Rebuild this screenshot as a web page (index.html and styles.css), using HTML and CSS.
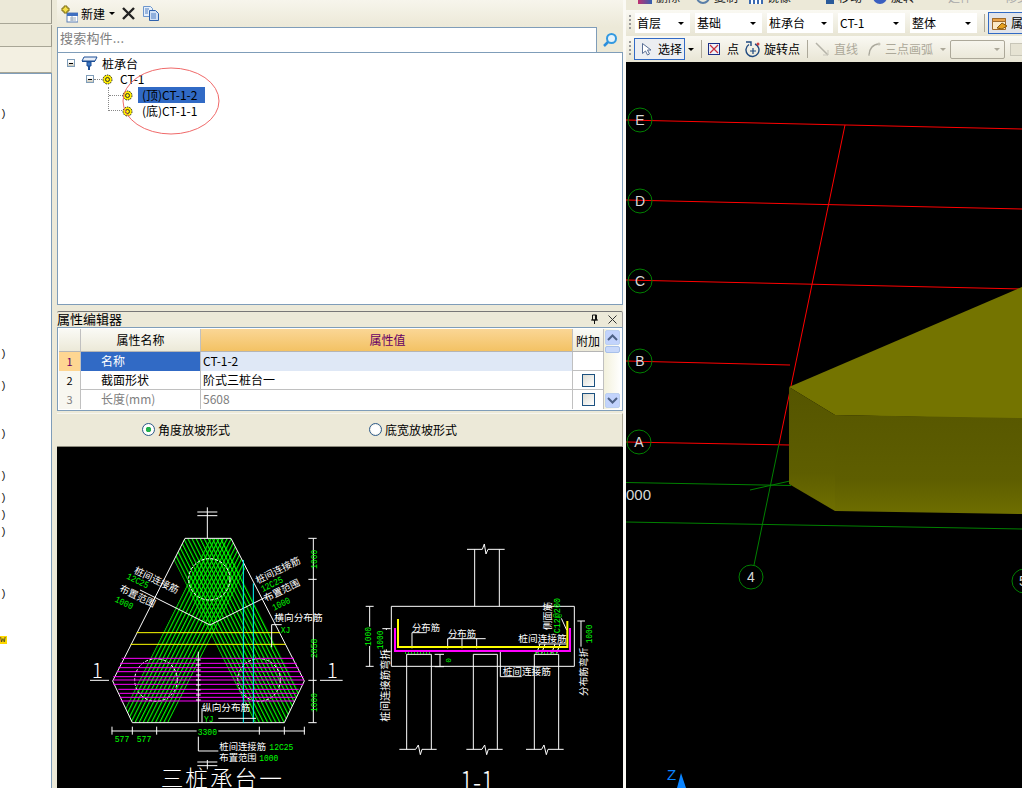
FILE: index.html
```html
<!DOCTYPE html>
<html lang="zh">
<head>
<meta charset="utf-8">
<title>桩承台</title>
<link rel="stylesheet" href="styles.css">
</head>
<body>
<div class="app">
  <aside class="left">
    <div class="left-tab t1"></div>
    <div class="left-tab t2"></div>
    <div class="left-tab t3"></div>
    <div class="left-list">
      <span class="p p1">)</span><span class="p p2">)</span><span class="p p3">)</span><span class="p p4">)</span><span class="p p5">)</span><span class="p p6">)</span><span class="p p7">)</span><span class="p p8">)</span><span class="p p9">)</span><span class="p w">w</span>
    </div>
  </aside>

  <main class="mid">
    <div class="tools">
      <svg class="ico-new" width="17" height="18" viewBox="0 0 17 18"><rect x="6" y="8" width="11" height="9" fill="#fff" stroke="#5b7fb5"/><rect x="6" y="8" width="11" height="3" fill="#3f6fc0"/><path d="M9 13h6M9 15h6M11 11v5" stroke="#9ab" fill="none"/><path d="M3 1h3v2h2v3H6v2H3V6H1V3h2z" fill="#f6e04a" stroke="#7a6a10"/></svg>
      <span class="tool-t">新建</span>
      <i class="arrow a-new"></i>
      <svg class="ico-x" width="15" height="15" viewBox="0 0 15 15"><path d="M2 2l11 11M13 2L2 13" stroke="#222" stroke-width="2.4"/></svg>
      <svg class="ico-copy" width="16" height="15" viewBox="0 0 16 15"><path d="M.5.5h7l2 2v8h-9z" fill="#e6effa" stroke="#6d96cc"/><path d="M6.500 4.500h6l3 3v7h-9z" fill="#cfe0f6" stroke="#2f62ad"/><path d="M2 3h4M2 5h3M2 7h3M8 8h5M8 10h5M8 12h5" stroke="#4f7fc2"/></svg>
    </div>
    <div class="search">
      <div class="search-box">搜索构件...</div>
      <div class="search-btn"><svg width="16" height="16" viewBox="0 0 16 16"><circle cx="9.500" cy="6.500" r="4.500" fill="#e4f2fb" stroke="#3399e0" stroke-width="2"/><path d="M6 10l-4 4" stroke="#2c8fdc" stroke-width="2.500"/></svg></div>
    </div>
    <div class="tree">
      <div class="node n0">
        <i class="exp"></i>
        <svg class="ico-cap" width="17" height="14" viewBox="0 0 17 14"><path d="M3 1h13l-2 4H1z" fill="#e8eef8" stroke="#1d4f96"/><path d="M1 5h13v1H1z" fill="#1d4f96"/><path d="M6 6h4v4H6z" fill="#3f78c4" stroke="#1d4f96"/><path d="M8 10v4" stroke="#1d4f96" stroke-width="2"/></svg>
        <span>桩承台</span>
      </div>
      <div class="node n1">
        <i class="exp"></i><i class="dots-h"></i>
        <svg class="gear" width="11" height="11" viewBox="0 0 11 11"><circle cx="5.500" cy="5.500" r="4.500" fill="#ffee00" stroke="#222" stroke-dasharray="1.500 1"/><circle cx="5.500" cy="5.500" r="2" fill="#ffee00" stroke="#333"/></svg>
        <span>CT-1</span>
      </div>
      <div class="branch"></div>
      <div class="node n2">
        <svg class="gear" width="11" height="11" viewBox="0 0 11 11"><circle cx="5.500" cy="5.500" r="4.500" fill="#ffee00" stroke="#222" stroke-dasharray="1.500 1"/><circle cx="5.500" cy="5.500" r="2" fill="#ffee00" stroke="#333"/></svg>
        <span class="sel">(顶)CT-1-2</span>
      </div>
      <div class="node n3">
        <svg class="gear" width="11" height="11" viewBox="0 0 11 11"><circle cx="5.500" cy="5.500" r="4.500" fill="#ffee00" stroke="#222" stroke-dasharray="1.500 1"/><circle cx="5.500" cy="5.500" r="2" fill="#ffee00" stroke="#333"/></svg>
        <span class="lbl">(底)CT-1-1</span>
      </div>
      <svg class="ring" width="100" height="70" viewBox="0 0 100 70"><ellipse cx="49" cy="35" rx="48" ry="33" fill="none" stroke="#f06a6a"/></svg>
    </div>

    <div class="prop-head">
      <span class="prop-title">属性编辑器</span>
      <svg width="9" height="11" viewBox="0 0 9 11" class="pin"><path d="M2.500 1h4v5h-4zM1 6h7M4.500 6v4M5.500 1v5" stroke="#111" fill="none"/></svg>
      <svg width="9" height="9" viewBox="0 0 9 9" class="close"><path d="M.5.500l8 8M8.500.500l-8 8" stroke="#333" fill="none"/></svg>
    </div>
    <div class="prop">
      <div class="grid">
        <div class="row head">
          <div class="c num"></div><div class="c name">属性名称</div><div class="c val hv">属性值</div><div class="c add">附加</div>
        </div>
        <div class="row r1">
          <div class="c num on">1</div><div class="c name on2">名称</div><div class="c val v1">CT-1-2</div><div class="c add"></div>
        </div>
        <div class="row">
          <div class="c num">2</div><div class="c name">截面形状</div><div class="c val">阶式三桩台一</div><div class="c add"><i class="chk"></i></div>
        </div>
        <div class="row dim">
          <div class="c num">3</div><div class="c name">长度(mm)</div><div class="c val">5608</div><div class="c add"><i class="chk"></i></div>
        </div>
      </div>
      <div class="sbar">
        <div class="sb-btn"><svg width="11" height="7" viewBox="0 0 11 7"><path d="M1 6l4.500-4.500L10 6" stroke="#4d6185" stroke-width="2" fill="none"/></svg></div>
        <div class="sb-thumb"></div>
        <div class="sb-btn down"><svg width="11" height="7" viewBox="0 0 11 7"><path d="M1 1l4.500 4.500L10 1" stroke="#4d6185" stroke-width="2" fill="none"/></svg></div>
      </div>
    </div>
    <div class="radios">
      <span class="rad r-a"><i class="radio checked"></i>角度放坡形式</span>
      <span class="rad r-b"><i class="radio"></i>底宽放坡形式</span>
    </div>

    <svg class="cad" viewBox="57 447 566 341" width="566" height="341">
      <defs>
        <pattern id="hb" width="11" height="11" patternUnits="userSpaceOnUse" patternTransform="rotate(-26.600)"><rect width="3.500" height="11" fill="#00ff00"/></pattern>
        <pattern id="ha" width="11" height="11" patternUnits="userSpaceOnUse" patternTransform="rotate(26.600)"><rect width="3.500" height="11" fill="#00ff00"/></pattern>
        <clipPath id="hex"><path d="M285 115H423L643 543 583 668H127L68 543Z"/></clipPath>
      </defs>
      <g transform="translate(90 500) scale(.33333)">
        <g clip-path="url(#hex)">
          <path d="M219 115H400L676 668H495Z" fill="url(#hb)"/>
          <path d="M361 115H511L235 668H85Z" fill="url(#ha)"/>
        </g>
        <path class="k" d="M352 22V115M322 36H382M322 47H382M285 115H423L643 543 583 668H127L68 543ZM150 270L360 375 530 290M0 541H57M690 541H758"/>
        <circle class="k dash" cx="358" cy="238" r="62"/><circle class="k dash" cx="198" cy="540" r="64"/><circle class="k dash" cx="507" cy="540" r="64"/>
        <path class="m" d="M95 475H612M90 490H620M85 503H626M80 515H632M70 530H640M70 540H642M70 553H640M85 568H626M88 580H620M90 592H616M92 603H612"/>
        <path class="y" d="M140 398H570M122 433H586"/>
        <path class="cy" d="M460 180V668M490 250V668"/>
        <path class="k" d="M545 374V442M545 374H575M325 455V668M336 625V668M385 655H498M670 115V668M655 115H680M655 238H680M655 541H680M655 668H680M65 693H320M385 693H645M66 680V704M127 680V704M200 680V704M508 680V704M583 680V704M643 680V704M325 710V753H385M352 780V808M322 786H382M322 797H382"/>
        <path class="k" d="M318 480H332M318 495H332M318 510H332M318 525H332M318 540H332M318 555H332M318 570H332M318 585H332M318 600H332"/>
        <text class="tw" x="553" y="363" font-size="29">横向分布筋</text>
        <text class="tg" x="572" y="400" font-size="28" textLength="29" lengthAdjust="spacingAndGlyphs">XJ</text>
        <text class="tw" x="336" y="634" font-size="29">纵向分布筋</text>
        <text class="tg" x="342" y="666" font-size="28" textLength="29" lengthAdjust="spacingAndGlyphs">YJ</text>
        <text class="tg" x="74" y="726" font-size="28" textLength="44" lengthAdjust="spacingAndGlyphs">577</text>
        <text class="tg" x="140" y="726" font-size="28" textLength="44" lengthAdjust="spacingAndGlyphs">577</text>
        <text class="tg" x="323" y="704" font-size="28" textLength="58" lengthAdjust="spacingAndGlyphs">3300</text>
        <text class="tw" x="388" y="749" font-size="28">桩间连接筋</text><text class="tg" x="538" y="750" font-size="28" textLength="72" lengthAdjust="spacingAndGlyphs">12C25</text>
        <text class="tw" x="388" y="784" font-size="28">布置范围</text><text class="tg" x="508" y="783" font-size="28" textLength="57" lengthAdjust="spacingAndGlyphs">1000</text>
        <text class="tg" transform="translate(680 206) rotate(-90)" font-size="28" textLength="57" lengthAdjust="spacingAndGlyphs">1000</text>
        <text class="tg" transform="translate(680 474) rotate(-90)" font-size="28" textLength="58" lengthAdjust="spacingAndGlyphs">2858</text>
        <text class="tg" transform="translate(680 636) rotate(-90)" font-size="28" textLength="57" lengthAdjust="spacingAndGlyphs">1000</text>
        <text class="tw" transform="translate(503 252) rotate(-26)" font-size="29">桩间连接筋</text>
        <text class="tg" transform="translate(518 276) rotate(-26)" font-size="28" textLength="70" lengthAdjust="spacingAndGlyphs">12C25</text>
        <text class="tw" transform="translate(528 306) rotate(-26)" font-size="29">布置范围</text>
        <text class="tg" transform="translate(552 332) rotate(-26)" font-size="28" textLength="57" lengthAdjust="spacingAndGlyphs">1000</text>
        <text class="tw" transform="translate(130 218) rotate(26)" font-size="29">桩间连接筋</text>
        <text class="tg" transform="translate(108 235) rotate(26)" font-size="28" textLength="70" lengthAdjust="spacingAndGlyphs">12C25</text>
        <text class="tw" transform="translate(86 272) rotate(26)" font-size="29">布置范围</text>
        <text class="tg" transform="translate(73 304) rotate(26)" font-size="28" textLength="57" lengthAdjust="spacingAndGlyphs">1000</text>
        <text class="tb" x="5" y="535" font-size="62">1</text>
        <text class="tb" x="710" y="535" font-size="62">1</text>
        <text class="tb" x="212" y="862" font-size="68" letter-spacing="6">三桩承台一</text>
      </g>
      <g transform="translate(350 530) scale(.33333)">
        <path class="k" d="M351 58H397L403 42 408 72 414 58H464M374 58V229M448 58V229M124 229H673V409H124ZM170 373V658M244 373V658M370 373V658M442 373V658M553 373V658M626 373V658M170 373H244M370 373H442M553 373H626M148 658H197L205 645 211 674 216 658H260M349 658H396L404 645 410 674 415 658H458M528 658H575L582 645 589 674 594 658H641"/>
        <path class="k" d="M47 229H71M47 409H71M59 229V290M59 348V409M97 296H122M97 364H122M109 296V300M109 358V364M186 308H230M186 308V355M293 326H407M293 326V355M336 326V355M380 326V355M451 360V440H515M254 373H282M254 410H282M270 373V410M682 273H705M693 273V350M565 342H650M560 370L570 342M575 370L585 342M605 370L615 342M620 370L630 342M634 265L650 300"/>
        <path class="m3" d="M135 294V363H660V294"/>
        <path class="y3" d="M144 267V351H652V273"/>
        <path class="gd" d="M165 369H245M555 369H625"/>
        <text class="tw" x="186" y="302" font-size="28">分布筋</text>
        <text class="tw" x="294" y="320" font-size="28">分布筋</text>
        <text class="tw" x="505" y="335" font-size="29">桩间连接筋</text>
        <text class="tw" x="458" y="436" font-size="29">桩间连接筋</text>
        <text class="tw" transform="translate(602 300) rotate(-90)" font-size="28">侧面筋</text>
        <text class="tg" transform="translate(630 310) rotate(-90)" font-size="28" textLength="106" lengthAdjust="spacingAndGlyphs">C12@200</text>
        <text class="tg" transform="translate(63 348) rotate(-90)" font-size="28" textLength="57" lengthAdjust="spacingAndGlyphs">1000</text>
        <text class="tg" transform="translate(100 358) rotate(-90)" font-size="28" textLength="56" lengthAdjust="spacingAndGlyphs">1000</text>
        <text class="tg" transform="translate(725 340) rotate(-90)" font-size="28" textLength="56" lengthAdjust="spacingAndGlyphs">1000</text>
        <text class="tg" transform="translate(302 398) rotate(-90)" font-size="24">0</text>
        <text class="tw" transform="translate(116 575) rotate(-90)" font-size="31">桩间连接筋弯折</text>
        <text class="tw" transform="translate(712 498) rotate(-90)" font-size="29">分布筋弯折</text>
        <text class="tb" x="330" y="790" font-size="90" textLength="102" lengthAdjust="spacingAndGlyphs">1-1</text>
      </g>
    </svg>
  </main>

  <div class="strip"></div>

  <section class="right">
    <div class="bar0">
      <div class="bar0-in"><i class="b0i b-a"></i><span>删除</span><i class="b0i b-b"></i><span>复制</span><i class="b0i b-c"></i><span>镜像</span><i class="b0i b-d"></i><span>移动</span><i class="b0i b-e"></i><span>旋转</span><span class="g g1">延伸</span><span class="g g2">修剪</span></div>
    </div>
    <div class="bar1">
      <i class="grip"></i>
      <div class="combo w56"><span>首层</span><i class="arrow"></i></div>
      <div class="combo w68"><span>基础</span><i class="arrow"></i></div>
      <div class="combo w67"><span>桩承台</span><i class="arrow"></i></div>
      <div class="combo w68"><span>CT-1</span><i class="arrow"></i></div>
      <div class="combo w68"><span>整体</span><i class="arrow"></i></div>
      <i class="sep s1"></i>
      <div class="attr"><svg width="16" height="15" viewBox="0 0 16 15"><path d="M.5 2.500h13v11H.5z" fill="#fbe9c6" stroke="#a06a2a"/><path d="M.5 2.500h13v3H.5z" fill="#e9a34a" stroke="#a06a2a"/><path d="M5 12l5-5 5 3-5 3z" fill="#e6a020" stroke="#8a5a10"/></svg><span>属</span></div>
    </div>
    <div class="bar2">
      <i class="grip"></i>
      <div class="sel-btn"><svg width="12" height="15" viewBox="0 0 12 15"><path d="M2.500 1.500v10l3-2.500 2 4 2-1-2-4h3.500z" fill="#fff" stroke="#5a6f96"/></svg><span>选择</span></div>
      <i class="arrow a-sel"></i>
      <i class="sep s2"></i>
      <svg class="i-pt" width="12" height="12" viewBox="0 0 12 12"><rect x=".5" y=".5" width="11" height="11" fill="#eef2fa" stroke="#1c2f86"/><path d="M2 2l8 8M10 2l-8 8" stroke="#c8303a" stroke-width="1.200"/></svg>
      <span class="t t-pt">点</span>
      <svg class="i-rot" width="16" height="17" viewBox="0 0 16 17"><path d="M4 3.500a6.500 6.500 0 1 0 6-.5" fill="none" stroke="#1f4a80" stroke-width="1.400"/><path d="M1 1h5v4" fill="none" stroke="#1f4a80" stroke-width="1.400"/><path d="M8 7v6M5 10h6" stroke="#1f4a80" stroke-width="1.200"/><circle cx="13" cy="3" r="1.500" fill="#d04040"/></svg>
      <span class="t t-rot">旋转点</span>
      <i class="sep s3"></i>
      <svg class="i-ln" width="14" height="14" viewBox="0 0 14 14"><path d="M1 1l12 12" stroke="#b5b3a8" stroke-width="1.500"/><path d="M8 13h5V8" fill="none" stroke="#c9c7bc"/></svg>
      <span class="t off t-ln">直线</span>
      <svg class="i-arc" width="14" height="14" viewBox="0 0 14 14"><path d="M2 13C2 7 6 2 12 2" fill="none" stroke="#aaa89c" stroke-width="1.500"/><circle cx="12" cy="2" r="1.500" fill="#c4c2b6"/><circle cx="2" cy="13" r="1" fill="#c4c2b6"/></svg>
      <span class="t off t-arc">三点画弧</span>
      <i class="arrow off-a a-arc"></i>
      <div class="dis-combo"><i class="arrow off-a"></i></div>
      <i class="dis-end"></i>
    </div>
    <svg class="scene" viewBox="626 62 396 726" width="396" height="726">
      <defs>
        <linearGradient id="lf" x1="0" y1="0" x2="0" y2="1"><stop offset="0" stop-color="#555500"/><stop offset=".7" stop-color="#5e5e00"/><stop offset="1" stop-color="#6f6f00"/></linearGradient>
        <linearGradient id="fr" x1="0" y1="0" x2="0" y2="1"><stop offset="0" stop-color="#585800"/><stop offset=".65" stop-color="#5e5e00"/><stop offset="1" stop-color="#6e6e00"/></linearGradient>
      </defs>
      <path class="rl" d="M626 120L1022 129M626 200L1022 209M626 280L1022 289M626 361L790 365M626 442L790 445M845 125L779 444"/>
      <path class="gl" d="M626 482.500L791 485.500M626 522L1022 529M779 444L754 565M750 490L790 481"/>
      <path d="M789 387L1022 287V419L835 415Z" fill="#747400"/>
      <path d="M789 387L835 415V511L789 484Z" fill="url(#lf)"/>
      <path d="M835 415L1022 418V514L835 511Z" fill="url(#fr)"/>
      <g class="axis">
        <circle cx="640" cy="120" r="12"/><circle cx="640" cy="201" r="12"/><circle cx="640" cy="281" r="12"/><circle cx="640" cy="361" r="12"/><circle cx="639" cy="442" r="12"/><circle cx="751" cy="577" r="12"/><circle cx="1024" cy="581" r="12"/>
      </g>
      <g class="labels">
        <text x="640" y="125">E</text><text x="640" y="206">D</text><text x="640" y="286">C</text><text x="640" y="366">B</text><text x="639" y="447">A</text><text x="751" y="582">4</text><text x="1023" y="586">5</text>
      </g>
      <text class="z000" x="626" y="500">000</text>
      <text class="zl" x="667" y="780">Z</text>
      <path d="M681 773L686 788H677Z" fill="#0a84ff"/>
    </svg>
  </section>
</div>
</body>
</html>
```

FILE: styles.css
```css
* { box-sizing: border-box; }
html, body { margin: 0; padding: 0; height: 100%; overflow: hidden; }
body { font: 12px "Noto Sans CJK SC", "Liberation Sans", sans-serif; color: #000; background: #ece9d8; }
i { display: block; font-style: normal; }
.app { display: flex; width: 1022px; height: 788px; overflow: hidden; }

.left { width: 57px; flex: none; padding-right: 5px; display: flex; flex-direction: column; background: #ece9d8; }
.left-tab { border-right: 1px solid #9c9a8c; border-bottom: 1px solid #a8a696; background: #ece9d8; }
.t1 { height: 24px; }
.t2 { height: 22px; margin-top: 1px; }
.t3 { height: 26px; background: #f3f0e2; border-right-color: #d0cebf; }
.left-list { flex: 1; position: relative; background: #fff; border-right: 1px solid #7f9db9; border-top: 1px solid #7f9db9; }
.p { position: absolute; left: 0; font: 11px "Liberation Mono", monospace; color: #222; }
.p1 { top: 34px; } .p2 { top: 274px; } .p3 { top: 306px; } .p4 { top: 354px; } .p5 { top: 396px; }
.p6 { top: 418px; } .p7 { top: 435px; } .p8 { top: 452px; } .p9 { top: 514px; }
.w { top: 562px; background: #ffd800; color: #333; line-height: 8px; font-size: 9px; width: 7px; }

.mid { width: 566px; flex: none; display: flex; flex-direction: column; }
.tools { height: 27px; flex: none; display: flex; align-items: center; padding-left: 4px; background: linear-gradient(#f7f5ec, #ece9d8); }
.tool-t { margin-left: 3px; font-size: 12px; }
.arrow { width: 0; height: 0; border: 3px solid transparent; border-top: 3px solid #000; border-bottom: 0; flex: none; }
.a-new { margin-left: 4px; }
.ico-x { margin-left: 6px; }
.ico-copy { margin-left: 7px; }
.search { height: 25px; flex: none; display: flex; background: #ece9d8; }
.search-box { width: 540px; height: 25px; border: 1px solid #7f9db9; border-bottom: 0; background: #fff; color: #808080; padding: 0 2px; font-size: 13px; line-height: 19px; letter-spacing: .2px; }
.search-btn { flex: 1; display: flex; align-items: center; justify-content: center; }

.tree { height: 253px; flex: none; position: relative; background: #fff; border: 1px solid #7f9db9; padding-top: 2px; }
.node { height: 16px; display: flex; align-items: center; position: relative; font-size: 12px; }
.exp { width: 8px; height: 8px; border: 1px solid #7f9db9; background: linear-gradient(#fff 30%, #ccc8b8); position: relative; flex: none; }
.exp::after { content: ""; position: absolute; left: 1px; right: 1px; top: 2.500px; height: 1px; background: #000; }
.n0 { padding-left: 9px; }
.n0 .ico-cap { margin-left: 6px; }
.n0 span { margin-left: 4px; }
.n1 { padding-left: 28px; }
.dots-h { width: 8px; border-top: 1px dotted #888; flex: none; }
.n1 span { margin-left: 7px; margin-top: -2px; }
.gear { flex: none; }
.branch { position: absolute; left: 50px; top: 34px; width: 14px; height: 24px; border-left: 1px dotted #888; border-bottom: 1px dotted #888; }
.branch::before { content: ""; position: absolute; left: 0; top: 8px; width: 14px; border-top: 1px dotted #888; }
.n2, .n3 { padding-left: 64px; }
.n2 .sel { margin-left: 5px; background: #316ac5; width: 67px; height: 16px; line-height: 15px; padding-left: 4px; flex: none; white-space: nowrap; }
.n3 .lbl { margin-left: 5px; padding-left: 4px; margin-top: -2px; }
.ring { position: absolute; left: 64px; top: 13px; }

.prop-head { height: 16px; margin-top: 6px; flex: none; display: flex; align-items: center; border-top: 1px solid #777; border-right: 1px solid #999; border-radius: 2px 2px 0 0; background: #ece9d8; font-size: 13px; }
.prop-title { flex: 1; padding-bottom: 3px; line-height: 13px; }
.pin { margin-right: 9px; }
.close { margin-right: 5px; }
.prop { height: 84px; flex: none; display: flex; border: 1px solid #7f9db9; padding: 1px; background: #fff; }
.grid { width: 545px; flex: none; display: flex; flex-direction: column; }
.row { height: 19px; display: grid; grid-template-columns: 22px 120px 372px 31px; border-bottom: 1px solid #c0c0c0; font-size: 12px; }
.row.head { height: 23px; border-bottom: 1px solid #b5b5b5; }
.c { display: flex; align-items: center; border-right: 1px solid #c0c0c0; padding-bottom: 2px; }
.num { justify-content: center; background: #f8f7f0; font-size: 11px; }
.name { padding-left: 20px; }
.val { padding-left: 2px; }
.add { justify-content: center; padding-bottom: 0; }
.head .c { background: linear-gradient(#fafaf5, #ece9d8); }
.head .name { justify-content: center; padding-left: 0; }
.head .val.hv { background: linear-gradient(#fad695, #f3c264); color: #660066; justify-content: center; }
.num.on { background: #fed692; color: #660066; }
.name.on2 { background: #316ac5; color: #fff; }
.v1 { background: #dfe8f6; }
.dim { border-bottom: 0; color: #808080; }
.chk { width: 13px; height: 13px; border: 1px solid #1c5180; background: linear-gradient(135deg, #dcdcd4, #fff); }
.sbar { flex: 1; display: flex; flex-direction: column; background: linear-gradient(90deg, #f3f1dc, #fff); padding: 1px; position: relative; }
.sb-btn { width: 15px; height: 15px; border: 1px solid #bcd0ef; background: #c2d3fc; border-radius: 2px; display: flex; align-items: center; justify-content: center; }
.sb-thumb { width: 15px; height: 7px; margin-top: 1px; border: 1px solid #a8c0ea; background: #c8d8fa; border-radius: 2px; }
.sb-btn.down { margin-top: auto; }

.radios { height: 34px; margin-top: 2px; flex: none; display: flex; align-items: center; padding-bottom: 2px; background: #ece9d8; border-top: 1px solid #f7f6ef; border-bottom: 1px solid #8c8a7c; border-right: 1px solid #a8a696; }
.rad { display: flex; align-items: center; gap: 3px; font-size: 12px; }
.r-a { margin-left: 85px; }
.r-b { margin-left: 139px; }
.radio { width: 13px; height: 13px; border-radius: 50%; border: 1px solid #2c5a8a; background: radial-gradient(circle, #fff 50%, #dcd9c8); }
.radio.checked { background: radial-gradient(circle, #22b14c 0 2.500px, #fff 3px 5px, #dcd9c8); }
.cad { display: block; flex: none; background: #000; }
.k { fill: none; stroke: #fff; stroke-width: 3; }
.dash { stroke-dasharray: 9 5; }
.m { fill: none; stroke: #ff00ff; stroke-width: 3; }
.m3 { fill: none; stroke: #ff00ff; stroke-width: 6; }
.y { fill: none; stroke: #ffff00; stroke-width: 3; }
.y3 { fill: none; stroke: #ffff00; stroke-width: 6; }
.cy { fill: none; stroke: #00ffff; stroke-width: 3; }
.gd { fill: none; stroke: #00ff00; stroke-width: 4; stroke-dasharray: 3 6; }
.tw { fill: #fff; }
.tg { fill: #00ff00; font-family: "Liberation Mono", monospace; }
.tb { fill: #fff; font-family: "Noto Sans CJK SC", "Liberation Sans", sans-serif; font-weight: 300; }

.strip { width: 3px; flex: none; background: #fbfaf5; }
.right { flex: 1; min-width: 0; display: flex; flex-direction: column; background: #ece9d8; }
.bar0 { height: 10px; flex: none; overflow: hidden; }
.bar0-in { display: flex; align-items: center; margin-top: -11px; font-size: 12px; line-height: 16px; white-space: nowrap; color: #222; }
.bar0-in span { margin-left: 4px; }
.b0i { width: 14px; height: 14px; flex: none; }
.b-a { margin-left: 12px; background: linear-gradient(90deg, #c03070, #3060b0); }
.b-b { margin-left: 16px; border: 2px solid #5a7fa8; border-radius: 50%; }
.b-c { margin-left: 11px; background: repeating-linear-gradient(90deg, #3a6ab0 0 2px, #fff 2px 4px); }
.b-d { margin-left: 35px; width: 8px; background: #2a5a9a; }
.b-e { margin-left: 11px; background: #3a5fc0; border-radius: 50%; }
.bar0-in .g { color: #aaa; }
.bar0-in .g1 { margin-left: 33px; }
.bar0-in .g2 { margin-left: 33px; }
.bar1, .bar2 { height: 26px; flex: none; display: flex; align-items: center; background: linear-gradient(#faf9f3, #e8e5d4); padding-left: 3px; white-space: nowrap; }
.grip { width: 2px; height: 16px; flex: none; background: repeating-linear-gradient(#999 0 2px, transparent 2px 4px); }
.combo { height: 20px; display: flex; align-items: center; justify-content: space-between; background: #fff; margin-right: 5px; padding: 0 6px 0 2px; font-size: 12px; flex: none; }
.combo span { margin-top: -2px; }
.bar1 .grip + .combo { margin-left: 4px; }
.w56 { width: 55px; } .w68 { width: 67px; } .w67 { width: 66px; }
.sep { width: 1px; height: 18px; background: #aca899; flex: none; }
.s1 { margin-left: 2px; }
.attr { margin-left: 3px; width: 60px; height: 22px; display: flex; align-items: center; gap: 3px; padding-left: 3px; border: 1px solid #316ac5; background: #e2e4ea; flex: none; font-size: 12px; }
.attr span { margin-top: -2px; }
.sel-btn { margin-left: 3px; width: 51px; height: 22px; display: flex; align-items: center; gap: 6px; padding-left: 5px; border: 1px solid #316ac5; background: #eceef2; flex: none; }
.sel-btn span, .t { margin-top: -2px; }
.a-sel { margin-left: 3px; }
.s2 { margin-left: 7px; }
.i-pt { margin-left: 6px; flex: none; }
.t { font-size: 12px; flex: none; }
.t-pt { margin-left: 7px; }
.i-rot { margin-left: 6px; flex: none; }
.t-rot { margin-left: 3px; }
.s3 { margin-left: 7px; }
.i-ln { margin-left: 7px; flex: none; }
.off { color: #aca899; }
.t-ln { margin-left: 5px; }
.i-arc { margin-left: 9px; flex: none; }
.t-arc { margin-left: 4px; }
.off-a { border-top-color: #aca899; }
.a-arc { margin-left: 7px; }
.dis-combo { margin-left: 4px; width: 55px; height: 19px; border: 1px solid #aca899; border-radius: 2px; display: flex; align-items: center; justify-content: flex-end; padding-right: 4px; flex: none; }
.dis-end { margin-left: 5px; width: 14px; height: 13px; border: 1px solid #c8c6b8; background: #e6e3d3; flex: none; }
.scene { display: block; flex: none; background: #000; }
.rl { fill: none; stroke: #ff0000; stroke-width: 1; }
.gl { fill: none; stroke: #008000; stroke-width: 1; }
.axis circle { fill: none; stroke: #008000; stroke-width: 1; }
.labels text { fill: #d8d8d8; font: 14px "Liberation Sans", sans-serif; text-anchor: middle; }
.z000 { fill: #d8d8d8; font: 15px "Liberation Sans", sans-serif; }
.zl { fill: #0a84ff; font: 15px "Liberation Sans", sans-serif; }
```
